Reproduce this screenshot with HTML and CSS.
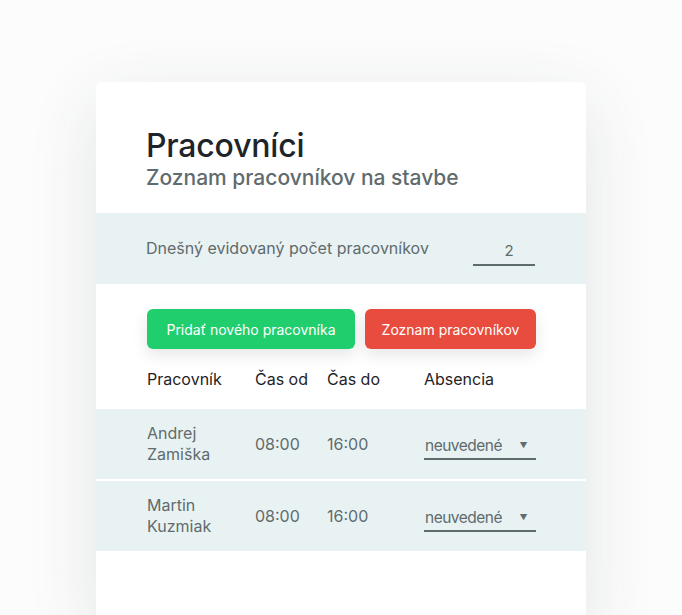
FILE: index.html
```html
<!DOCTYPE html>
<html lang="sk">
<head>
<meta charset="utf-8">
<link rel="stylesheet" href="styles.css">
</head>
<body>
<div class="card">
  <header class="head">
    <h1 class="title">Pracovníci</h1>
    <p class="subtitle">Zoznam pracovníkov na stavbe</p>
  </header>
  <div class="band">
    <span class="band-label">Dnešný evidovaný počet pracovníkov</span>
    <span class="count">2</span>
  </div>
  <div class="actions">
    <button class="btn btn-green">Pridať nového pracovníka</button>
    <button class="btn btn-red">Zoznam pracovníkov</button>
  </div>
  <div class="grid thead">
    <span>Pracovník</span>
    <span>Čas od</span>
    <span>Čas do</span>
    <span>Absencia</span>
  </div>
  <div class="grid row">
    <span class="name">Andrej<br>Zamiška</span>
    <span>08:00</span>
    <span>16:00</span>
    <span class="select">neuvedené<span class="caret">▼</span></span>
  </div>
  <div class="grid row">
    <span class="name">Martin<br>Kuzmiak</span>
    <span>08:00</span>
    <span>16:00</span>
    <span class="select">neuvedené<span class="caret">▼</span></span>
  </div>
</div>
</body>
</html>
```

FILE: styles.css
```css
html, body {
  margin: 0;
  padding: 0;
  height: 615px;
  overflow: hidden;
  background: #fcfcfc;
  font-family: Inter, "Liberation Sans", sans-serif;
}
body {
  padding-top: 82px;
  box-sizing: border-box;
}
.card {
  margin-left: 96px;
  width: 490px;
  height: 540px;
  background: #fff;
  border-radius: 6px;
  box-shadow: 0 20px 70px rgba(40, 60, 60, 0.12);
}
.head {
  padding: 44px 50px 0 50px;
  height: 131px;
  box-sizing: border-box;
}
.title {
  margin: 0;
  font-size: 32px;
  line-height: 40px;
  font-weight: 500;
  color: #1d2529;
  letter-spacing: -0.2px;
}
.subtitle {
  margin: -1px 0 0 0;
  font-size: 21px;
  line-height: 26px;
  font-weight: 500;
  color: #5f6b6d;
}
.band {
  height: 71px;
  background: #e9f2f3;
  display: flex;
  align-items: center;
  justify-content: space-between;
  padding: 0 51px 0 50px;
  box-sizing: border-box;
}
.band-label {
  font-size: 16px;
  color: #5f6b6d;
  margin-top: -1px;
}
.count {
  width: 62px;
  text-align: center;
  font-size: 15px;
  color: #5f6b6d;
  border-bottom: 2px solid #5e6b6b;
  padding: 6px 0 4px 10px;
  margin-top: 4px;
  box-sizing: border-box;
}
.actions {
  display: flex;
  gap: 10px;
  padding: 25px 50px 0 51px;
}
.btn {
  height: 40px;
  border: none;
  border-radius: 6px;
  color: #fff;
  font-family: inherit;
  font-size: 14px;
  font-weight: 400;
  box-shadow: 0 6px 16px rgba(0, 0, 0, 0.10);
}
.btn-green {
  width: 208px;
  background: #20ce6e;
}
.btn-red {
  width: 171px;
  background: #e84c3e;
}
.grid {
  display: grid;
  grid-template-columns: 108px 72px 97px 112px;
  align-items: center;
  padding-left: 51px;
}
.thead {
  height: 60px;
  font-size: 16px;
  color: #1f2326;
}
.row {
  height: 70px;
  background: #e9f2f3;
  font-size: 16px;
  color: #5f6b6d;
  margin-bottom: 2px;
}
.name {
  line-height: 21px;
}
.select {
  display: flex;
  justify-content: space-between;
  align-items: center;
  border-bottom: 2px solid #5e6b6b;
  padding: 3px 9px 3px 1px;
  margin-top: 4px;
  font-size: 15.5px;
  letter-spacing: -0.5px;
}
.caret {
  font-size: 8px;
}
```
